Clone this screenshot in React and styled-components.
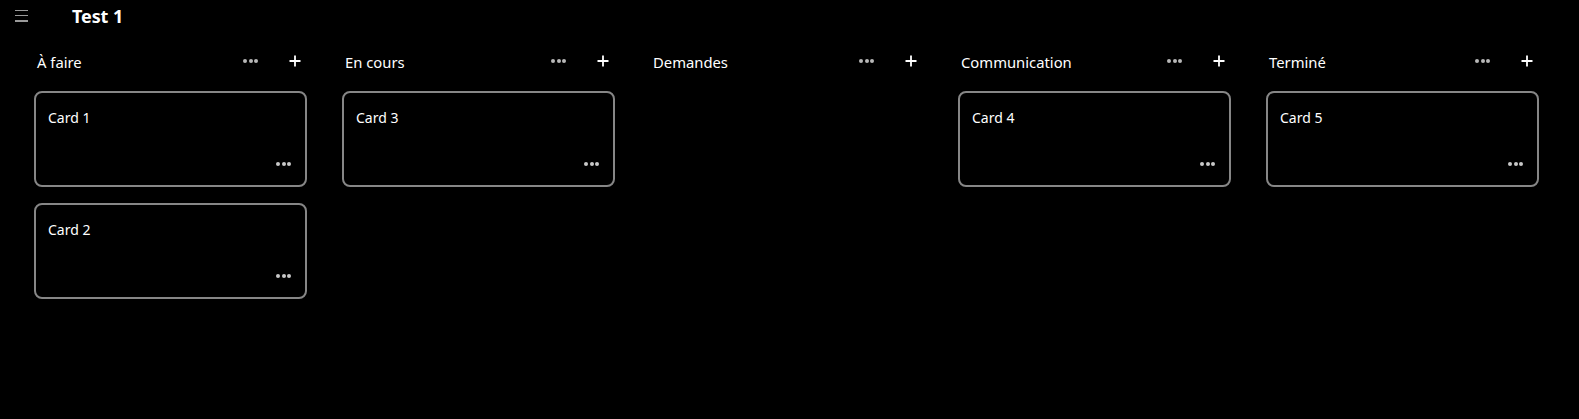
import React from "react";
import styled, { createGlobalStyle } from "styled-components";

const Global = createGlobalStyle`
  html, body { margin: 0; padding: 0; background: #000; }
  body { font-family: "Noto Sans", "Open Sans", sans-serif; color: #fff; }
`;

const Page = styled.div`
  width: 1579px;
  height: 419px;
  background: #000;
  overflow: hidden;
`;

const TopBar = styled.div`
  display: flex;
  align-items: center;
  height: 32px;
  padding-left: 15px;
`;

const Burger = styled.div`
  display: flex;
  flex-direction: column;
  justify-content: space-between;
  width: 13px;
  height: 12px;
  margin-top: -1px;
  span {
    display: block;
    height: 1.5px;
    background: #9a9a9a;
  }
`;

const Title = styled.h1`
  margin: -1px 0 0 44px;
  font-size: 18px;
  font-weight: 700;
  line-height: 24px;
  letter-spacing: -0.1px;
`;

const Board = styled.div`
  display: flex;
  gap: 26px;
  padding: 14px 0 0 30px;
`;

const Column = styled.div`
  width: 282px;
  flex: none;
  display: flex;
  flex-direction: column;
`;

const ColHeader = styled.div`
  display: flex;
  align-items: center;
  height: 30px;
  padding: 0 11px 0 7px;
`;

const ColTitle = styled.div`
  flex: 1;
  font-size: 14.8px;
  line-height: 20px;
  margin-top: 2px;
`;

const Dots = styled.div`
  display: flex;
  gap: 1.5px;
  span {
    width: 4px;
    height: 4px;
    border-radius: 50%;
    background: ${(p) => p.$color};
  }
`;

const Plus = styled.svg`
  margin-left: 31px;
  display: block;
`;

const Cards = styled.div`
  display: flex;
  flex-direction: column;
  gap: 16px;
  margin: 15px 5px 0 4px;
`;

const Card = styled.div`
  box-sizing: border-box;
  height: 96px;
  border: 2px solid #868686;
  border-radius: 8px;
  padding: 15px 14px 19px 12px;
  display: flex;
  flex-direction: column;
  justify-content: space-between;
`;

const CardText = styled.div`
  font-size: 14px;
  line-height: 20px;
`;

const CardFoot = styled.div`
  display: flex;
  justify-content: flex-end;
`;

const DotIcon = ({ color }) => (
  <Dots $color={color}>
    <span />
    <span />
    <span />
  </Dots>
);

const columns = [
  { title: "À faire", cards: ["Card 1", "Card 2"] },
  { title: "En cours", cards: ["Card 3"] },
  { title: "Demandes", cards: [] },
  { title: "Communication", cards: ["Card 4"] },
  { title: "Terminé", cards: ["Card 5"] },
];

export default function App() {
  return (
    <Page>
      <Global />
      <TopBar>
        <Burger>
          <span />
          <span />
          <span />
        </Burger>
        <Title>Test 1</Title>
      </TopBar>
      <Board>
        {columns.map((c) => (
          <Column key={c.title}>
            <ColHeader>
              <ColTitle>{c.title}</ColTitle>
              <DotIcon color="#b8b8b8" />
              <Plus width="12" height="12" viewBox="0 0 12 12">
                <path d="M6 0.5V11.5M0.5 6H11.5" stroke="#fff" strokeWidth="1.8" />
              </Plus>
            </ColHeader>
            <Cards>
              {c.cards.map((t) => (
                <Card key={t}>
                  <CardText>{t}</CardText>
                  <CardFoot>
                    <DotIcon color="#c8c8c8" />
                  </CardFoot>
                </Card>
              ))}
            </Cards>
          </Column>
        ))}
      </Board>
    </Page>
  );
}
